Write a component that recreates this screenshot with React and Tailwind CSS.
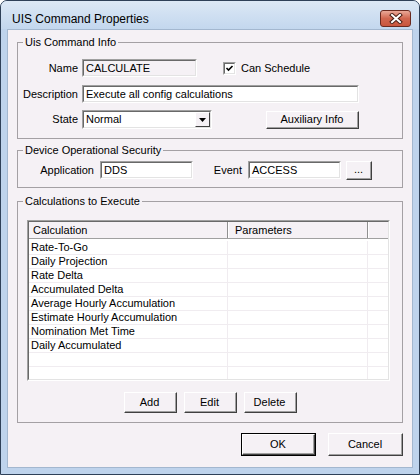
import clsx from 'clsx';

const face = 'bg-[#f5f1f5]';

const Field = ({ className, children, readOnly }) => (
  <div
    className={clsx(
      'flex h-[18px] items-center overflow-hidden border border-t-[#a0a0a0] border-l-[#a0a0a0] border-r-white border-b-white',
      readOnly ? face : 'bg-white',
      className
    )}
  >
    <div className="flex h-full w-full items-center border border-t-[#696969] border-l-[#696969] border-r-[#e3e3e3] border-b-[#e3e3e3] pl-[2px]">
      {children}
    </div>
  </div>
);

const Button = ({ className, children, isDefault }) => (
  <div className={clsx(isDefault ? 'border border-black' : '', className)}>
    <div
      className={clsx(
        'flex h-full w-full items-center justify-center border border-t-white border-l-white border-r-[#404040] border-b-[#404040] text-black',
        face
      )}
    >
      <span className="flex h-full w-full items-center justify-center border-r border-b border-[#a0a0a0] font-normal">{children}</span>
    </div>
  </div>
);

const Group = ({ title, className, children }) => (
  <div className={clsx('relative border border-[#a4a0a4]', className)}>
    <span className={clsx('absolute -top-[8px] left-[5px] px-[2px] leading-[14px]', face)}>{title}</span>
    {children}
  </div>
);

const Checkbox = () => (
  <div className="h-[13px] w-[13px] border border-t-[#a0a0a0] border-l-[#a0a0a0] border-r-white border-b-white">
    <div className="h-full w-full border border-t-[#696969] border-l-[#696969] border-r-[#e3e3e3] border-b-[#e3e3e3] bg-white">
      <svg width="9" height="9" viewBox="0 0 9 9" className="block">
        <path d="M1.5 4 L3.5 6 L7.5 2" stroke="black" strokeWidth="1.6" fill="none" />
      </svg>
    </div>
  </div>
);

const calculations = [
  'Rate-To-Go',
  'Daily Projection',
  'Rate Delta',
  'Accumulated Delta',
  'Average Hourly Accumulation',
  'Estimate Hourly Accumulation',
  'Nomination Met Time',
  'Daily Accumulated',
  '',
  '',
];

export default function App() {
  return (
    <div className="h-[475px] w-[420px] font-['Liberation_Sans',Arial,sans-serif] text-[11px] text-black">
      <div className="flex h-full w-full flex-col overflow-hidden rounded-t-[7px] border border-[#2e4058] bg-[#bed3ec]">
        {/* title bar */}
        <div className="flex h-[28px] shrink-0 items-start justify-between bg-gradient-to-b from-[#dce8f5] to-[#c3d7ee] pl-[11px] pr-[8px]">
          <span className="mt-[11px] text-[12px] leading-[14px] text-black">UIS Command Properties</span>
          <div className="mt-[9px] flex h-[17px] w-[31px] items-center justify-center rounded-[3px] border border-[#6a2a20] bg-gradient-to-b from-[#e9a898] via-[#d0664f] to-[#c9553d]">
            <svg width="14" height="11" viewBox="0 0 14 11">
              <path d="M3 2 L11 9 M11 2 L3 9" stroke="#4a1f16" strokeWidth="4" strokeLinecap="square" />
              <path d="M3 2 L11 9 M11 2 L3 9" stroke="white" strokeWidth="2" strokeLinecap="square" />
            </svg>
          </div>
        </div>

        {/* client area */}
        <div className={clsx('mx-[6px] flex h-[439px] shrink-0 flex-col border border-[#a3b7cf] px-[9px]', face)}>
          <Group title="Uis Command Info" className="mt-[12px] h-[97px] shrink-0 pt-[16px]">
            <div className="flex h-[18px] items-center">
              <span className="w-[60px] text-right">Name</span>
              <Field readOnly className="ml-[4px] w-[115px]">CALCULATE</Field>
              <div className="ml-[26px]">
                <Checkbox />
              </div>
              <span className="ml-[5px]">Can Schedule</span>
            </div>
            <div className="mt-[8px] flex h-[18px] items-center">
              <span className="w-[60px] text-right">Description</span>
              <Field className="ml-[4px] w-[277px]">Execute all config calculations</Field>
            </div>
            <div className="mt-[7px] flex h-[19px] items-center">
              <span className="w-[60px] text-right">State</span>
              <div className="ml-[4px] flex h-[19px] w-[130px] border border-t-[#a0a0a0] border-l-[#a0a0a0] border-r-white border-b-white bg-white">
                <div className="flex h-full w-full items-center border border-t-[#696969] border-l-[#696969] border-r-[#e3e3e3] border-b-[#e3e3e3]">
                  <span className="flex-1 pl-[2px]">Normal</span>
                  <div className={clsx('flex h-full w-[15px] items-center justify-center border border-t-white border-l-white border-r-[#404040] border-b-[#404040]', face)}>
                    <svg width="7" height="4" viewBox="0 0 7 4">
                      <path d="M0 0 H7 L3.5 4 Z" fill="black" />
                    </svg>
                  </div>
                </div>
              </div>
              <Button className="ml-[54px] h-[18px] w-[93px]">Auxiliary Info</Button>
            </div>
          </Group>

          <Group title="Device Operational Security" className="mt-[11px] h-[38px] shrink-0 pt-[10px]">
            <div className="flex h-[18px] items-center">
              <span className="w-[76px] text-right">Application</span>
              <Field className="ml-[6px] w-[93px]">DDS</Field>
              <span className="ml-[20px] w-[29px] text-right">Event</span>
              <Field className="ml-[6px] w-[93px]">ACCESS</Field>
              <Button className="ml-[5px] h-[19px] w-[26px]">...</Button>
            </div>
          </Group>

          <Group title="Calculations to Execute" className="mt-[13px] h-[222px] shrink-0 pt-[18px]">
            <div className="ml-[9px] h-[161px] w-[363px] border border-t-[#a0a0a0] border-l-[#a0a0a0] border-r-white border-b-white">
              <div className="flex h-full w-full flex-col overflow-hidden border border-t-[#696969] border-l-[#696969] border-r-[#e3e3e3] border-b-[#e3e3e3] bg-white">
                <div className={clsx('flex h-[17px] shrink-0 border-b border-[#a0a0a0]', face)}>
                  <div className="w-[199px] border-r border-[#909090] pl-[4px] leading-[16px]">Calculation</div>
                  <div className="w-[140px] border-r border-[#909090] border-l border-l-white pl-[6px] leading-[16px]">Parameters</div>
                  <div className="flex-1 border-l border-white" />
                </div>
                <div className="mt-[2px] flex flex-col">
                  {calculations.map((c, i) => (
                    <div key={i} className="flex h-[14px] shrink-0 border-b border-[#f0ecf0]">
                      <div className="w-[199px] border-r border-[#f0ecf0] pl-[2px] leading-[13px]">{c}</div>
                      <div className="w-[140px] border-r border-[#f0ecf0]" />
                      <div className="flex-1" />
                    </div>
                  ))}
                </div>
              </div>
            </div>
            <div className="mt-[11px] flex justify-center gap-[7px]">
              <Button className="h-[21px] w-[53px]">Add</Button>
              <Button className="h-[21px] w-[53px]">Edit</Button>
              <Button className="h-[21px] w-[53px]">Delete</Button>
            </div>
          </Group>

          <div className="mt-[10px] flex justify-end gap-[12px]">
            <Button isDefault className="h-[23px] w-[75px]">OK</Button>
            <Button className="h-[23px] w-[75px]">Cancel</Button>
          </div>
        </div>
      </div>
    </div>
  );
}
